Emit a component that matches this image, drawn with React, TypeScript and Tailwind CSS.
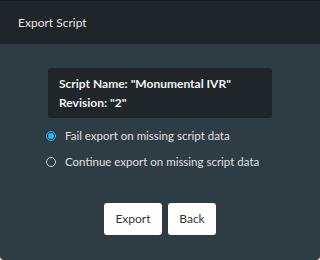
import { useState } from "react";

const options = [
	"Fail export on missing script data",
	"Continue export on missing script data",
];

const App = () => {
	const [selected, setSelected] = useState(0);

	return (
		<div className="w-[320px] h-[260px] bg-[#2e3c43] rounded-b-[4px] overflow-hidden font-['Lato',sans-serif]">
			{/* HEADER */}
			<header className="h-[44px] bg-[#1f2528] border-t border-[#171c1e] flex items-center px-[18px]">
				<h1 className="text-[12px] text-[#e6e6e6]">Export Script</h1>
			</header>

			{/* BODY */}
			<div className="flex flex-col items-center pt-[24px]">
				<div className="w-[224px] h-[50px] bg-[#1f2629] rounded-[3px] px-[11px] flex flex-col justify-center gap-[3px] text-[12px] font-bold text-[#f2f2f2] leading-[16px]">
					<span>Script Name: "Monumental IVR"</span>
					<span>Revision: "2"</span>
				</div>

				<div className="self-start ml-[46px] mt-[10px] flex flex-col gap-[10px]">
					{options.map((label, i) => (
						<label
							key={label}
							onClick={() => setSelected(i)}
							className="flex items-center gap-[9px] text-[11.5px] text-[#e0e0e0] cursor-pointer h-[16px]"
						>
							<span
								className={
									selected === i
										? "size-[10px] rounded-full border border-[#29b6f6] flex items-center justify-center"
										: "size-[10px] rounded-full border border-[#d0d0d0]"
								}
							>
								{selected === i && <span className="size-[6px] rounded-full bg-[#29b6f6]" />}
							</span>
							{label}
						</label>
					))}
				</div>

				<div className="flex gap-[6px] mt-[33px]">
					<button className="w-[58px] h-[32px] bg-white rounded-[3px] text-[12px] text-[#333]">Export</button>
					<button className="w-[48px] h-[32px] bg-white rounded-[3px] text-[12px] text-[#333]">Back</button>
				</div>
			</div>
		</div>
	);
};

export default App;
